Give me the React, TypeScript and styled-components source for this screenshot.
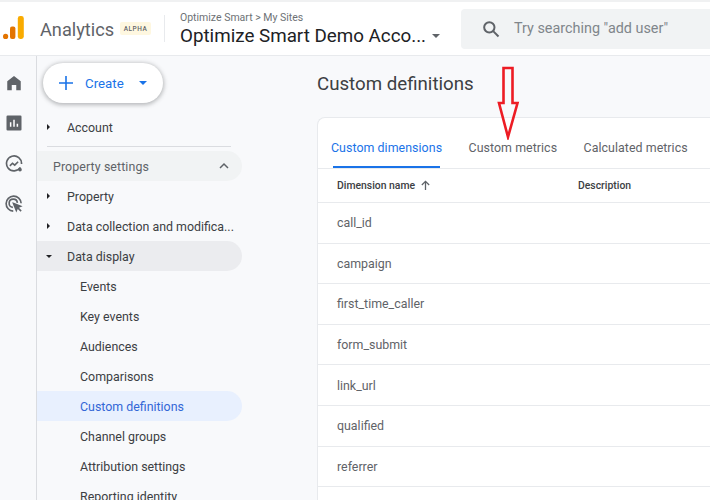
import React, { FunctionComponent } from 'react'
import styled, { createGlobalStyle } from 'styled-components'

const GlobalStyle = createGlobalStyle`
  html, body {
    margin: 0;
    padding: 0;
    background: #f8f9fb;
  }
  body {
    font-family: Roboto, "Liberation Sans", sans-serif;
  }
`

const Page = styled.div`
  width: 710px;
  height: 500px;
  overflow: hidden;
  position: relative;
  display: flex;
  flex-direction: column;
  background: #f8f9fb;
`

const TopEdge = styled.div`
  height: 2px;
  flex: none;
  background: #f0f1f2;
`

const Header = styled.header`
  height: 53px;
  flex: none;
  display: flex;
  align-items: center;
  background: #fff;
  border-bottom: 1px solid #e8eaed;
`

const Logo = styled.svg`
  width: 22px;
  height: 26px;
  margin-left: 3px;
  flex: none;
`

const Brand = styled.span`
  margin-left: 15px;
  padding-top: 2px;
  font-size: 18.2px;
  color: #5f6368;
  width: 73px;
  flex: none;
`

const Alpha = styled.span`
  margin-left: 7px;
  width: 31px;
  height: 13px;
  flex: none;
  display: flex;
  align-items: center;
  justify-content: center;
  background: #fef7e0;
  border-radius: 2px;
  color: #5f6368;
  font-size: 6.5px;
  font-weight: 500;
  letter-spacing: 0.5px;
`

const HeaderRule = styled.div`
  width: 1px;
  height: 27px;
  margin-left: 13px;
  background: #e8eaed;
  flex: none;
`

const AccountBlock = styled.div`
  margin-left: 15px;
  padding-top: 2px;
  width: 281px;
  flex: none;
  display: flex;
  flex-direction: column;
`

const Crumb = styled.div`
  font-size: 10.5px;
  line-height: 13px;
  color: #6d7175;
`

const AccountName = styled.div`
  display: flex;
  align-items: center;
  font-size: 18.8px;
  line-height: 24px;
  color: #202124;
`

const CaretDown = styled.span<{ $color?: string; $size?: number }>`
  display: inline-block;
  width: 0;
  height: 0;
  border-left: ${(p) => p.$size ?? 4}px solid transparent;
  border-right: ${(p) => p.$size ?? 4}px solid transparent;
  border-top: ${(p) => p.$size ?? 4}px solid ${(p) => p.$color ?? '#5f6368'};
`

const AccountCaret = styled(CaretDown)`
  margin-left: 6px;
`

const Search = styled.div`
  width: 249px;
  height: 40px;
  flex: none;
  display: flex;
  align-items: center;
  background: #f1f3f4;
  border-radius: 4px 0 0 4px;
  color: #80868b;
  font-size: 14.4px;
`

const SearchIcon = styled.svg`
  width: 20px;
  height: 20px;
  margin-left: 20px;
  margin-right: 13px;
  flex: none;
`

const Body = styled.div`
  flex: 1;
  min-height: 0;
  display: flex;
`

const Rail = styled.aside`
  flex: none;
  display: flex;
  flex-direction: column;
  align-items: flex-start;
  gap: 22.4px;
  padding: 18px 0 0 4.5px;
  box-sizing: content-box;
  width: 31.5px;
  border-right: 1px solid #dadce0;
`

const RailIcon = styled.svg`
  width: 18px;
  height: 18px;
  display: block;
`

const Nav = styled.nav`
  width: 205px;
  flex: none;
  display: flex;
  flex-direction: column;
`

const CreateButton = styled.div`
  width: 120px;
  height: 40px;
  margin: 7px 0 0 6px;
  display: flex;
  align-items: center;
  background: #fff;
  border-radius: 20px;
  box-shadow: 0 1px 4px 1px rgba(60, 64, 67, 0.35);
  color: #1a73e8;
  font-size: 13.3px;
  flex: none;
`

const PlusIcon = styled.svg`
  width: 16px;
  height: 16px;
  margin-left: 15px;
  margin-right: 11px;
`

const CreateCaret = styled(CaretDown)`
  margin-left: 15px;
`

const NavList = styled.div`
  margin-top: 9px;
  display: flex;
  flex-direction: column;
`

const NavRow = styled.div<{ $tone?: 'plain' | 'muted' | 'open' | 'active'; $depth?: number }>`
  height: 30px;
  flex: none;
  display: flex;
  align-items: center;
  box-sizing: border-box;
  padding-left: ${(p) => (p.$depth ? 43 : 9)}px;
  font-size: 12.4px;
  border-radius: 0 15px 15px 0;
  color: ${(p) =>
    p.$tone === 'active' ? '#3367d6' : p.$tone === 'muted' ? '#5f6368' : '#3c4043'};
  background: ${(p) =>
    p.$tone === 'active'
      ? '#e8f0fe'
      : p.$tone === 'open'
        ? '#ebecef'
        : p.$tone === 'muted'
          ? '#f1f3f4'
          : 'transparent'};
`

const Arrow = styled.span<{ $open?: boolean }>`
  width: 21px;
  flex: none;
  display: flex;
  align-items: center;
  &::before {
    content: '';
    margin-left: ${(p) => (p.$open ? 0 : 1)}px;
    border-style: solid;
    border-color: transparent;
    border-width: ${(p) => (p.$open ? '3px 3px 0 3px' : '3px 0 3px 3px')};
    ${(p) => (p.$open ? 'border-top-color: #202124;' : 'border-left-color: #202124;')}
  }
`

const NavDivider = styled.div`
  height: 1px;
  margin: 4px 11px 4px 10px;
  background: #dadce0;
`

const SectionRow = styled(NavRow)`
  padding-left: 16px;
  justify-content: space-between;
  padding-right: 12px;
  letter-spacing: 0.1px;
`

const Chevron = styled.svg`
  width: 12px;
  height: 12px;
`

const Main = styled.main`
  flex: 1;
  min-width: 0;
  padding: 15px 0 0 75px;
  display: flex;
  flex-direction: column;
`

const Title = styled.h1`
  margin: 0;
  font-size: 18.7px;
  font-weight: 400;
  line-height: 27px;
  color: #3c4043;
`

const Card = styled.section`
  margin-top: 19px;
  flex: 1;
  background: #fff;
  border: 1px solid #e8eaed;
  border-right: 0;
  border-bottom: 0;
  border-radius: 8px 0 0 0;
  display: flex;
  flex-direction: column;
`

const Tabs = styled.div`
  height: 50px;
  flex: none;
  display: flex;
  align-items: stretch;
  border-bottom: 1px solid #e8eaed;
  padding-left: 13px;
  gap: 26.5px;
`

const Tab = styled.div<{ $active?: boolean }>`
  position: relative;
  display: flex;
  align-items: center;
  padding-top: 9px;
  font-size: 12.4px;
  letter-spacing: 0.05px;
  color: ${(p) => (p.$active ? '#1a73e8' : '#5f6368')};
  ${(p) =>
    p.$active &&
    `&::after {
      content: '';
      position: absolute;
      left: 2px;
      right: 2px;
      bottom: 0;
      height: 2px;
      background: #1a73e8;
    }`}
`

const TableHead = styled.div`
  height: 33px;
  flex: none;
  display: grid;
  grid-template-columns: 241px 1fr;
  align-items: center;
  padding-left: 19px;
  border-bottom: 1px solid #e8eaed;
  font-size: 10.4px;
  font-weight: 500;
  color: #3c4043;
`

const SortLabel = styled.div`
  display: flex;
  align-items: center;
  gap: 5px;
`

const SortIcon = styled.svg`
  width: 11px;
  height: 11px;
`

const Row = styled.div`
  height: 40.6px;
  flex: none;
  box-sizing: border-box;
  display: flex;
  align-items: center;
  padding-left: 19px;
  border-bottom: 1px solid #e8eaed;
  font-size: 12.4px;
  color: #5f6368;
`

const RedArrow = styled.svg`
  position: absolute;
  left: 496px;
  top: 66px;
  width: 24px;
  height: 74px;
`

const DIMENSIONS = [
  'call_id',
  'campaign',
  'first_time_caller',
  'form_submit',
  'link_url',
  'qualified',
  'referrer',
]

const SUB_ITEMS = [
  'Events',
  'Key events',
  'Audiences',
  'Comparisons',
  'Custom definitions',
  'Channel groups',
  'Attribution settings',
  'Reporting identity',
]

const App: FunctionComponent = () => {
  return (
    <Page>
      <GlobalStyle />
      <TopEdge />
      <Header>
        <Logo viewBox="0 0 22 26">
          <circle cx="2.6" cy="20.4" r="2.6" fill="#e37400" />
          <rect x="7" y="10.5" width="5.4" height="12.5" rx="2" fill="#e37400" />
          <rect x="14.8" y="0" width="6" height="23" rx="2.4" fill="#f9ab00" />
        </Logo>
        <Brand>Analytics</Brand>
        <Alpha>ALPHA</Alpha>
        <HeaderRule />
        <AccountBlock>
          <Crumb>Optimize Smart &gt; My Sites</Crumb>
          <AccountName>
            Optimize Smart Demo Acco...
            <AccountCaret $size={4} />
          </AccountName>
        </AccountBlock>
        <Search>
          <SearchIcon viewBox="0 0 24 24" fill="none" stroke="#5f6368" strokeWidth="2.4">
            <circle cx="10" cy="10" r="6.2" />
            <path d="M14.6 14.6 21 21" />
          </SearchIcon>
          Try searching "add user"
        </Search>
      </Header>
      <Body>
        <Rail>
          <RailIcon viewBox="0 0 24 24" fill="#5f6368">
            <path d="M12 2.5 3 9.6V21.5h6v-7h6v7h6V9.6z" />
          </RailIcon>
          <RailIcon viewBox="0 0 24 24">
            <rect x="2" y="2" width="20" height="20" rx="1.5" fill="#5f6368" />
            <path d="M7.5 11v6M12 7.5V17M16.5 13v4" stroke="#fff" strokeWidth="2" />
          </RailIcon>
          <RailIcon viewBox="0 0 24 24" fill="none" stroke="#5f6368" strokeWidth="2.2">
            <path d="M20.5 16.5A10 10 0 1 1 22 12" />
            <path d="m6.5 14.5 3.5-3.5 3 2.5 4.5-4.5" />
            <circle cx="20" cy="19.5" r="1.3" />
          </RailIcon>
          <RailIcon viewBox="0 0 24 24" fill="none" stroke="#5f6368" strokeWidth="2.2">
            <path d="M11 21.5a10 10 0 1 1 10.5-10.5" />
            <path d="M10.5 16.5a5.5 5.5 0 1 1 6-6" />
            <path d="m11.5 11.5 9 3.4-3.8 1.6-1.6 3.8z" fill="#5f6368" />
            <path d="m16.5 16.5 5 5" />
          </RailIcon>
        </Rail>
        <Nav>
          <CreateButton>
            <PlusIcon viewBox="0 0 16 16" stroke="#1a73e8" strokeWidth="1.6">
              <path d="M8 1v14M1 8h14" />
            </PlusIcon>
            Create
            <CreateCaret $color="#1a73e8" />
          </CreateButton>
          <NavList>
            <NavRow>
              <Arrow />
              Account
            </NavRow>
            <NavDivider />
            <SectionRow $tone="muted">
              Property settings
              <Chevron viewBox="0 0 12 12" fill="none" stroke="#5f6368" strokeWidth="1.5">
                <path d="m2 8 4-4 4 4" />
              </Chevron>
            </SectionRow>
            <NavRow>
              <Arrow />
              Property
            </NavRow>
            <NavRow>
              <Arrow />
              Data collection and modifica...
            </NavRow>
            <NavRow $tone="open">
              <Arrow $open />
              Data display
            </NavRow>
            {SUB_ITEMS.map((item) => (
              <NavRow
                key={item}
                $depth={1}
                $tone={item === 'Custom definitions' ? 'active' : 'plain'}
              >
                {item}
              </NavRow>
            ))}
          </NavList>
        </Nav>
        <Main>
          <Title>Custom definitions</Title>
          <Card>
            <Tabs>
              <Tab $active>Custom dimensions</Tab>
              <Tab>Custom metrics</Tab>
              <Tab>Calculated metrics</Tab>
            </Tabs>
            <TableHead>
              <SortLabel>
                Dimension name
                <SortIcon viewBox="0 0 12 12" fill="none" stroke="#5f6368" strokeWidth="1.4">
                  <path d="M6 11V1.5M2 5.5l4-4 4 4" />
                </SortIcon>
              </SortLabel>
              <div>Description</div>
            </TableHead>
            {DIMENSIONS.map((name) => (
              <Row key={name}>{name}</Row>
            ))}
          </Card>
        </Main>
      </Body>
      <RedArrow viewBox="0 0 24 74">
        <path
          d="M7.5 2h9v35h5L12 71 3 37h4.5z"
          fill="none"
          stroke="#ed1c24"
          strokeWidth="2.6"
        />
      </RedArrow>
    </Page>
  )
}

export default App
